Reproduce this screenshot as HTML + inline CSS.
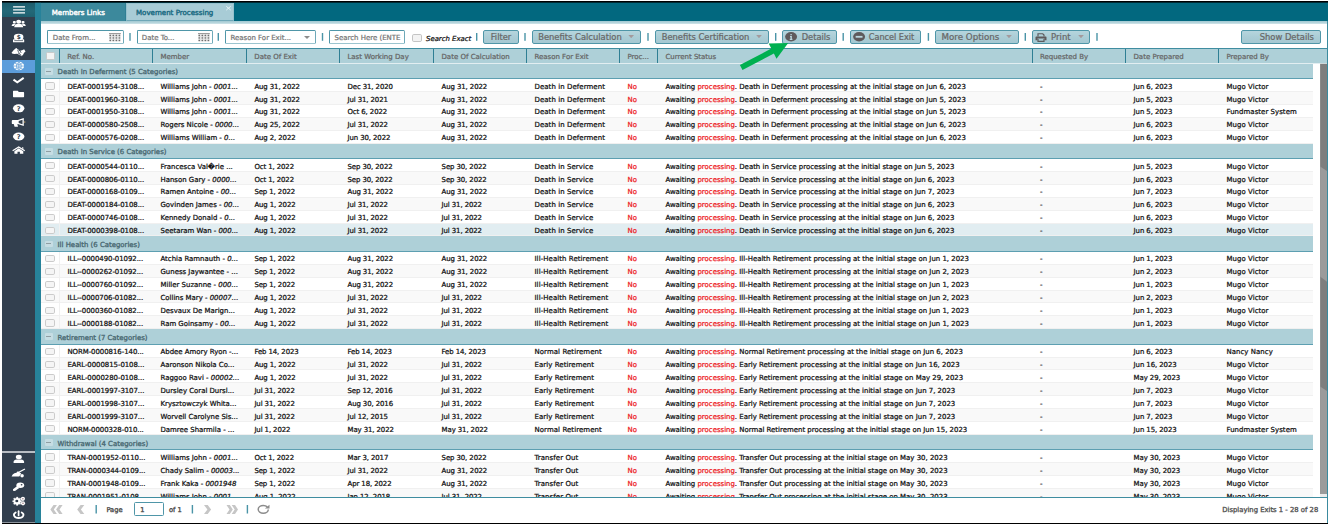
<!DOCTYPE html>
<html lang="en">
<head>
<meta charset="utf-8">
<title>Movement Processing</title>
<style>
html,body{margin:0;padding:0;}
body{width:1331px;height:526px;position:relative;background:#fff;overflow:hidden;font-family:"DejaVu Sans","Liberation Sans",sans-serif;font-weight:normal;font-size:7px;color:#000;-webkit-text-stroke:0.24px currentColor;}
div,span{box-sizing:border-box;}
.abs{position:absolute;}
#side{position:absolute;left:2px;top:2px;width:32.7px;height:520.7px;background:#323f4e;}
#burger{position:absolute;left:0;top:0;width:32.7px;height:14.5px;background:linear-gradient(#1d5b6b,#236878 60%,#1f6070);}
#side svg{position:absolute;overflow:visible;}
#act{position:absolute;left:0;top:57.5px;width:32.7px;height:13.9px;background:#5c9ddb;}
#sline{position:absolute;left:0;top:448.9px;width:32.7px;height:2px;background:#b9bec4;}
#strip{position:absolute;left:34.7px;top:2px;width:6px;height:520.7px;background:#27829a;}
#hbar{position:absolute;left:40.7px;top:2px;width:1287.3px;height:18.8px;background:#02687f;}
#tab1{position:absolute;left:41.4px;top:3px;width:84.4px;height:17.8px;background:#3c899c;color:#fff;border-right:1.3px solid #2f7f94;}
#tab2{position:absolute;left:126.3px;top:3px;width:107.7px;height:17.8px;background:#a8ccd6;color:#1b6b82;border:1px solid #95c1cd;border-bottom:1px solid #6ea7b7;}
.tt{position:absolute;top:4.6px;white-space:nowrap;font-size:7.07px;line-height:10px;-webkit-text-stroke:0.4px currentColor;}
#band{position:absolute;left:40.7px;top:20.8px;width:1286.6px;height:3.6px;background:linear-gradient(#a4c9d2,#aed0d8 40%,#c9e0e5 85%,#fff);}
#rborder{position:absolute;left:1327px;top:20.8px;width:0.9px;height:501.9px;background:#3a8a9e;}
/* toolbar */
.inp{position:absolute;top:30px;height:14.2px;border:1px solid #4f96a8;border-color:#4f96a8 #6ea9b8 #9cc5cf #4f96a8;border-radius:1.5px;background:#fff;color:#777;}
.inp span{position:absolute;top:3px;line-height:9.5px;white-space:nowrap;font-size:6.97px;}
.sep{position:absolute;top:33px;width:1.4px;height:7.8px;background:#4f98aa;}
.btn{position:absolute;top:30.1px;height:13.6px;border:1px solid #4f96a8;border-radius:2px;background:linear-gradient(#b6d5dd,#abcdd6 50%,#a4c8d2);color:#686868;}
.btn span{position:absolute;top:1.2px;line-height:10.4px;white-space:nowrap;font-size:8.35px;}
.dar{position:absolute;top:4px;width:5.6px;height:3.1px;background:#a3999c;clip-path:polygon(0 0,100% 0,50% 100%);}
.btn svg,.inp svg{position:absolute;overflow:visible;}
/* grid */
#ghdr{position:absolute;left:40.7px;top:48.2px;width:1286.6px;height:15.8px;background:#aed0d8;border-top:1px solid #3f8da0;border-bottom:1px solid #e2eef1;}
.hc{position:absolute;top:0;height:13.9px;border-left:1.3px solid #2f7f94;}
.hc:first-child{border-left:none;}
.ht{position:absolute;left:7px;top:3.8px;line-height:9.5px;color:#666;white-space:nowrap;font-size:7px;}
.hcb{position:absolute;left:4.9px;top:3.2px;width:9.4px;height:7.3px;background:#f4f4f4;border:0.8px solid #c9c9c9;border-radius:1.5px;}
#gbody{position:absolute;left:40.7px;top:63.8px;width:1272.3px;height:433.6px;overflow:hidden;background:#fff;}
.grp{position:absolute;left:0;width:1272.3px;height:15.4px;background:#aed0d8;border-bottom:1px solid #5d9fb1;}
.minus{position:absolute;left:4.2px;top:4.1px;width:8.1px;height:6.8px;background:#c6dde3;border-radius:1px;}
.minus:after{content:"";position:absolute;left:1.6px;top:2.9px;width:4.9px;height:1px;background:#8f9ea3;}
.gt{position:absolute;left:16.9px;top:3.3px;line-height:9.5px;white-space:nowrap;color:#4a6972;font-size:6.93px;-webkit-text-stroke:0.33px currentColor;}
.row{position:absolute;left:0;width:1272.3px;height:12.9px;border-bottom:0.6px solid #f0f0f0;background:#fff;}
.row.alt{background:#f9f9f9;}
.row.sel{background:#e1edf1;}
.cb{position:absolute;left:4.6px;top:3.1px;width:9.6px;height:7.3px;background:#f5f5f5;border:0.8px solid #cbcbcb;border-radius:1.8px;}
.row:before{content:"";position:absolute;left:18.6px;top:0;width:0.8px;height:12.9px;background:#f0f0f0;}
.c{position:absolute;top:2.4px;line-height:9.5px;white-space:nowrap;font-size:6.95px;color:#111;}
.c i{font-style:italic;}
.k1{letter-spacing:-0.045px;}.k3,.k4,.k5{letter-spacing:-0.095px;}.k6{letter-spacing:0.088px;}.k10{letter-spacing:-0.073px;}.k11{letter-spacing:0.055px;}
.r{color:#ed1c24;}
.d{color:#333;}
/* paging */
#ptb{position:absolute;left:40.7px;top:497.2px;width:1286.6px;height:25.5px;background:#fff;border-top:1px solid #3f8da0;color:#4a4a4a;}
#ptb span{position:absolute;white-space:nowrap;line-height:10px;font-size:6.7px;-webkit-text-stroke:0.34px currentColor;}
#ptb svg{position:absolute;overflow:visible;}
</style>
</head>
<body>
<!-- window frame -->
<div class="abs" style="left:2px;top:1px;width:1326px;height:1px;background:#000;z-index:30"></div>
<div class="abs" style="left:2px;top:2px;width:1326px;height:1px;background:rgba(0,0,0,.58);z-index:30"></div>
<div id="hbar"></div>
<div id="side">
  <div id="burger"></div>
  <div id="act"></div>
  <div id="sline"></div>
  <svg style="left:0;top:0" width="32.7" height="520.7" viewBox="2 2 32.7 520.7" fill="#fff">
    <!-- burger -->
    <path d="M13.100 6.700H25M13.100 9.750H25M13.100 12.700H25" stroke="#fff" stroke-width="1.300" fill="none"/>
    <!-- users -->
    <ellipse cx="18.700" cy="21.700" rx="2.500" ry="2"/>
    <path d="M14.200 27.100c0-2.300 1.600-3.400 4.500-3.400s4.500 1.100 4.500 3.400z"/>
    <rect x="12.900" y="20.900" width="2.900" height="2.600" rx="1"/>
    <rect x="21.600" y="20.900" width="2.900" height="2.600" rx="1"/>
    <path d="M11.700 26c0-1.600.9-2.400 2.600-2.400.6 0 1.100.1 1.500.4-1 .5-1.600 1.200-1.800 2zM25.700 26c0-1.600-.9-2.400-2.600-2.400-.6 0-1.100.1-1.500.4 1 .5 1.600 1.200 1.800 2z"/>
    <!-- user dollar -->
    <ellipse cx="18.650" cy="36.900" rx="4.800" ry="3.250"/>
    <path d="M13 42.100v-2.100c0-.5.300-.8.800-.8h9.600c.5 0 .8.300.8.800v2.100z"/>
    <path d="M14.300 40.300h8.700v.7h-8.700z" fill="#323f4e"/>
    <text x="18.650" y="39.100" font-size="5.800" font-weight="bold" text-anchor="middle" fill="#323f4e" font-family="DejaVu Sans, Liberation Sans, sans-serif">$</text>
    <!-- handshake -->
    <path d="M11.560 52.560L13.560 50.270 16.120 47.880 18.120 48.850 20.120 50.560 22.110 50.270 24.110 49.250 25.540 51.420 24.110 52.560 22.970 54.840 21.260 56.090 19.550 54.840 17.260 53.700 14.130 53.980 12.130 53.410z"/>
    <path d="M17.600 50.100l1.700 3.300M19.900 50.400l1.300 2.500" stroke="#323f4e" stroke-width=".75" fill="none"/><path d="M17.200 47.900l1.500 2.300 1.400.4M21.200 56.100l-1.200-2.200-1.600-.5" stroke="#323f4e" stroke-width=".8" fill="none"/>
    <!-- globe -->
    <ellipse cx="18.850" cy="66" rx="5.250" ry="4.250"/>
    <path d="M18.850 61.750v8.500M13.600 66h10.500M15 63.100c2.300 1.700 5.400 1.700 7.700 0M15 68.900c2.300-1.700 5.400-1.700 7.700 0M18.850 61.800c-3.200 2.200-3.200 6.200 0 8.400M18.850 61.800c3.200 2.200 3.200 6.200 0 8.400" stroke="#5b9bd5" stroke-width=".7" fill="none"/>
    <!-- check -->
    <path d="M13.500 79.600l3.800 2.700 6.400-4.500" stroke="#fff" stroke-width="2" fill="none"/>
    <!-- folder -->
    <path d="M13 91.400c0-.4.200-.6.600-.6h4.200l1 1.200h4.700c.4 0 .6.200.6.600v3.900c0 .4-.2.600-.6.600h-9.900c-.4 0-.6-.2-.6-.6z"/>
    <!-- question -->
    <ellipse cx="18.700" cy="108.300" rx="5.700" ry="4"/>
    <text x="18.700" y="110.700" font-size="6.600" font-weight="bold" text-anchor="middle" fill="#323f4e" font-family="DejaVu Sans, Liberation Sans, sans-serif">?</text>
    <!-- megaphone -->
    <path d="M11.800 120.900c0-.6.300-.9.900-.9h5.100l6-2v8l-6-2h-.4l.6 2.800h-3.400l-.9-2.800h-1c-.6 0-.9-.3-.9-.9z"/>
    <path d="M18.700 121l3.800-1.200v4.400l-3.800-1.200z" fill="#323f4e"/>
    <rect x="24.400" y="121.300" width=".8" height="1.400" fill="#f0c070"/>
    <!-- question 2 -->
    <ellipse cx="18.700" cy="136.500" rx="5.700" ry="4"/>
    <text x="18.700" y="138.900" font-size="6.600" font-weight="bold" text-anchor="middle" fill="#323f4e" font-family="DejaVu Sans, Liberation Sans, sans-serif">?</text>
    <!-- home -->
    <path d="M18.700 146.300l6.400 4-.7.800-5.700-3.500-5.700 3.500-.7-.8z"/>
    <path d="M18.700 148.300l4.600 2.800v2.600h-3.400v-1.900h-2.400v1.900h-3.100v-2.600z"/>
    <path d="M22.100 147.100h1.200v2l-1.200-.8z"/>
    <!-- user -->
    <ellipse cx="18.800" cy="457" rx="3" ry="2.250"/>
    <path d="M13.600 463.200v-1.300c0-1.500 1.200-2.400 3-2.400h4.500c1.800 0 3 .9 3 2.400v1.300z"/>
    <!-- broom -->
    <path d="M24.970 469.100L18.400 472.600" stroke="#fff" stroke-width="1.300" fill="none"/>
    <path d="M17.830 471.400L21.260 473.700 19.260 476.600 11.560 476.700 12.700 474.500 14.400 473.400 16.400 472.800z"/>
    <circle cx="22.100" cy="475.800" r="1.750"/>
    <!-- key -->
    <ellipse cx="20.300" cy="485.300" rx="3.900" ry="2.700"/>
    <path d="M17.260 486L19.260 488 14.980 491 12.990 490.800 12.990 489.400z"/>
    <ellipse cx="21.600" cy="484.800" rx=".9" ry=".75" fill="#323f4e"/>
    <!-- cogs -->
    <path d="M16.700 497l1 .1.400 1 1 .4 1-.5.800.8-.6.900.3.800 1.100.3v1.100l-1.100.3-.3.800.6.900-.8.800-1-.5-1 .4-.4 1h-1.200l-.3-1-1-.4-1 .5-.8-.8.600-.9-.3-.8-1.100-.3v-1.100l1.100-.3.300-.8-.6-.9.800-.8 1 .5 1-.4z" stroke="#fff" stroke-width=".3"/>
    <ellipse cx="16.800" cy="501.100" rx="1.500" ry="1.200" fill="#323f4e"/>
    <circle cx="22.900" cy="498.900" r="2.100"/><circle cx="23" cy="503.400" r="2.100"/>
    <circle cx="22.900" cy="498.900" r=".7" fill="#8a6a70"/><circle cx="23" cy="503.400" r=".7" fill="#8a6a70"/>
    <!-- power -->
    <path d="M15.700 512.600c-3.300 1.800-1.700 5.500 3 5.500s6.300-3.700 3-5.500" stroke="#fff" stroke-width="1.800" fill="none" stroke-linecap="round"/>
    <path d="M18.600 511.300v4.200" stroke="#fff" stroke-width="1.700" stroke-linecap="round" fill="none"/>
  </svg>
</div>
<div id="strip"></div>
<div id="tab1"><span class="tt" style="left:10.3px">Members Links</span></div>
<div id="tab2"><span class="tt" style="left:8.7px;top:3.6px">Movement Processing</span>
  <svg class="abs" style="left:98.400px;top:2.400px;overflow:visible" width="5" height="4.400" viewBox="0 0 5 4.400"><path d="M.3.300l4.400 3.800M4.700.3L.3 4.100" stroke="#e9f3f6" stroke-width="1"/></svg>
</div>
<div id="band"></div>
<div id="rborder"></div>
<!-- toolbar -->
<div class="inp" style="left:47.100px;width:76.600px"><span style="left:4.700px">Date From...</span>
  <svg style="left:61px;top:2px" width="11.800" height="8.400" viewBox="0 0 11.800 8.400"><rect x="0" y="0" width="11.800" height="8.400" fill="#e4e4e4"/><rect x="0" y="0" width="11.800" height="1" fill="#9c9c9c"/><rect x="1.00" y="1.2" width=".5" height="7.100" fill="#b5b5b5"/><rect x="4.05" y="1.2" width=".5" height="7.100" fill="#b5b5b5"/><rect x="7.10" y="1.2" width=".5" height="7.100" fill="#b5b5b5"/><rect x="10.15" y="1.2" width=".5" height="7.100" fill="#b5b5b5"/><g fill="#6f6f6f"><rect x="0.50" y="1.90" width="1.500" height="1.100"/><rect x="3.55" y="1.90" width="1.500" height="1.100"/><rect x="6.60" y="1.90" width="1.500" height="1.100"/><rect x="9.65" y="1.90" width="1.500" height="1.100"/><rect x="0.50" y="4.40" width="1.500" height="1.100"/><rect x="3.55" y="4.40" width="1.500" height="1.100"/><rect x="6.60" y="4.40" width="1.500" height="1.100"/><rect x="9.65" y="4.40" width="1.500" height="1.100"/><rect x="0.50" y="7.00" width="1.500" height="1.100"/><rect x="3.55" y="7.00" width="1.500" height="1.100"/><rect x="6.60" y="7.00" width="1.500" height="1.100"/><rect x="9.65" y="7.00" width="1.500" height="1.100"/></g></svg>
</div>
<div class="inp" style="left:136.900px;width:75.700px"><span style="left:3.900px">Date To...</span>
  <svg style="left:60px;top:2px" width="11.800" height="8.400" viewBox="0 0 11.800 8.400"><rect x="0" y="0" width="11.800" height="8.400" fill="#e4e4e4"/><rect x="0" y="0" width="11.800" height="1" fill="#9c9c9c"/><rect x="1.00" y="1.2" width=".5" height="7.100" fill="#b5b5b5"/><rect x="4.05" y="1.2" width=".5" height="7.100" fill="#b5b5b5"/><rect x="7.10" y="1.2" width=".5" height="7.100" fill="#b5b5b5"/><rect x="10.15" y="1.2" width=".5" height="7.100" fill="#b5b5b5"/><g fill="#6f6f6f"><rect x="0.50" y="1.90" width="1.500" height="1.100"/><rect x="3.55" y="1.90" width="1.500" height="1.100"/><rect x="6.60" y="1.90" width="1.500" height="1.100"/><rect x="9.65" y="1.90" width="1.500" height="1.100"/><rect x="0.50" y="4.40" width="1.500" height="1.100"/><rect x="3.55" y="4.40" width="1.500" height="1.100"/><rect x="6.60" y="4.40" width="1.500" height="1.100"/><rect x="9.65" y="4.40" width="1.500" height="1.100"/><rect x="0.50" y="7.00" width="1.500" height="1.100"/><rect x="3.55" y="7.00" width="1.500" height="1.100"/><rect x="6.60" y="7.00" width="1.500" height="1.100"/><rect x="9.65" y="7.00" width="1.500" height="1.100"/></g></svg>
</div>
<div class="inp" style="left:225px;width:91px"><span style="left:4.500px">Reason For Exit...</span>
  <i class="dar" style="left:78px;top:5px;background:#8d8d8d;width:6px;height:2.900px"></i>
</div>
<div class="inp" style="left:329.100px;width:75.900px"><span style="left:4.500px">Search Here (ENTE</span></div>
<div class="abs" style="left:412px;top:34.300px;width:9.500px;height:7.900px;background:#f3f3f3;border:0.8px solid #c4c4c4;border-radius:1.800px"></div>
<span class="abs" style="left:426px;top:35px;line-height:9.500px;font-style:italic;font-size:6.910px;white-space:nowrap;color:#111">Search Exact</span>
<div class="btn" style="left:483px;width:35.600px"><span style="left:6.700px;font-size:8.28px">Filter</span></div>
<div class="btn" style="left:531.700px;width:109.700px"><span style="left:5.500px;font-size:8.37px">Benefits Calculation</span><i class="dar" style="left:95.700px"></i></div>
<div class="btn" style="left:654.800px;width:113.800px"><span style="left:5.900px;font-size:8.35px">Benefits Certification</span><i class="dar" style="left:100.400px"></i></div>
<div class="btn" style="left:782.200px;width:54.600px"><span style="left:18.500px;font-size:8.28px">Details</span>
  <svg style="left:2px;top:1.200px" width="12.200" height="9.600" viewBox="0 0 23 19" preserveAspectRatio="none"><ellipse cx="11.500" cy="9.500" rx="11.300" ry="9.300" fill="#5e5a5c"/><path d="M11.500 4v2.500M9.500 9h2.200v5.500M9 14.600h5" stroke="#b9d6de" stroke-width="2.600" fill="none"/></svg>
</div>
<div class="btn" style="left:850px;width:71px"><span style="left:17.800px;font-size:8.12px">Cancel Exit</span>
  <svg style="left:2px;top:1.200px" width="12.200" height="9.600" viewBox="0 0 23 19" preserveAspectRatio="none"><ellipse cx="11.500" cy="9.500" rx="11.300" ry="9.300" fill="#5e5a5c"/><path d="M5 9.500h13" stroke="#b9d6de" stroke-width="3.600"/></svg>
</div>
<div class="btn" style="left:935px;width:84px"><span style="left:5.500px;font-size:8.7px">More Options</span><i class="dar" style="left:70.200px"></i></div>
<div class="btn" style="left:1032.200px;width:58.200px"><span style="left:17.900px;font-size:8.5px">Print</span><i class="dar" style="left:45px"></i>
  <svg style="left:2.200px;top:1.600px" width="12" height="9" viewBox="0 0 24 18" fill="none"><path d="M6 7V1.500h9.500L18 4v3" stroke="#5e5a5c" stroke-width="2.400"/><path d="M1 9c0-1.200.8-2 2-2h18c1.200 0 2 .8 2 2v5.500h-4V11H5v3.500H1z" fill="#5e5a5c"/><path d="M6 12v4.800h12V12" stroke="#5e5a5c" stroke-width="2.400"/></svg>
</div>
<div class="btn" style="left:1241.100px;width:79.800px"><span style="left:17.600px;font-size:8.37px">Show Details</span></div>
<!-- green arrow -->
<svg class="abs" style="left:0;top:0;z-index:20;pointer-events:none" width="1331" height="100" viewBox="0 0 1331 100"><g fill="#4a94a7"><rect x="129.3" y="33" width="1.4" height="7.8"/><rect x="217.6" y="33" width="1.4" height="7.8"/><rect x="321.8" y="33" width="1.4" height="7.8"/><rect x="476.0" y="33" width="1.4" height="7.8"/><rect x="524.3" y="33" width="1.4" height="7.8"/><rect x="647.3" y="33" width="1.4" height="7.8"/><rect x="775.0" y="33" width="1.4" height="7.8"/><rect x="842.5" y="33" width="1.4" height="7.8"/><rect x="927.7" y="33" width="1.4" height="7.8"/><rect x="1024.6" y="33" width="1.4" height="7.8"/><rect x="1096.3" y="33" width="1.4" height="7.8"/></g><polygon points="739.9,64.900 771.300,48.600 768.700,43.400 788.200,43.100 776.500,58.800 773.900,53.600 742.500,69.900" fill="#00b050"/></svg>

<div id="ghdr">
<div class="hc" style="left:0px;width:18.6px"><span class="hcb"></span></div>
<div class="hc" style="left:18.6px;width:93.1px"><span class="ht">Ref. No.</span></div>
<div class="hc" style="left:111.7px;width:93.9px"><span class="ht">Member</span></div>
<div class="hc" style="left:205.6px;width:93.1px"><span class="ht">Date Of Exit</span></div>
<div class="hc" style="left:298.7px;width:94.1px"><span class="ht">Last Working Day</span></div>
<div class="hc" style="left:392.8px;width:92.9px"><span class="ht">Date Of Calculation</span></div>
<div class="hc" style="left:485.7px;width:93px"><span class="ht">Reason For Exit</span></div>
<div class="hc" style="left:578.7px;width:38px"><span class="ht">Proc...</span></div>
<div class="hc" style="left:616.7px;width:374.5px"><span class="ht">Current Status</span></div>
<div class="hc" style="left:991.2px;width:93.6px"><span class="ht">Requested By</span></div>
<div class="hc" style="left:1084.8px;width:92.9px"><span class="ht">Date Prepared</span></div>
<div class="hc" style="left:1177.7px;width:108.9px"><span class="ht">Prepared By</span></div>
</div>
<div id="gbody">
<div class="grp" style="top:0px"><span class="minus"></span><span class="gt" style="top:4.2px">Death In Deferment (5 Categories)</span></div>
<div class="row" style="top:15.4px"><span class="cb"></span>
<span class="c k1" style="left:26.7px;top:3.8px">DEAT-0001954-3108...</span>
<span class="c k2" style="left:119.8px;top:3.8px">Williams John - <i>0001...</i></span>
<span class="c k3" style="left:213.7px;top:3.8px">Aug 31, 2022</span>
<span class="c k4" style="left:306.8px;top:3.8px">Dec 31, 2020</span>
<span class="c k5" style="left:400.9px;top:3.8px">Aug 31, 2022</span>
<span class="c k6" style="left:493.8px;top:3.8px">Death in Deferment</span>
<span class="c k7" style="left:586.8px;top:3.8px"><span class="r">No</span></span>
<span class="c k8" style="left:624.8px;top:3.8px">Awaiting <span class="r">processing</span>. Death in Deferment processing at the initial stage on Jun 6, 2023</span>
<span class="c k9" style="left:999.3px;top:3.8px"><span class="d">-</span></span>
<span class="c k10" style="left:1092.9px;top:3.8px">Jun 6, 2023</span>
<span class="c k11" style="left:1185.8px;top:3.8px">Mugo Victor</span>
</div>
<div class="row alt" style="top:28.3px"><span class="cb"></span>
<span class="c k1" style="left:26.7px;top:3.9px">DEAT-0001960-3108...</span>
<span class="c k2" style="left:119.8px;top:3.9px">Williams John - <i>0001...</i></span>
<span class="c k3" style="left:213.7px;top:3.9px">Aug 31, 2022</span>
<span class="c k4" style="left:306.8px;top:3.9px">Jul 31, 2021</span>
<span class="c k5" style="left:400.9px;top:3.9px">Aug 31, 2022</span>
<span class="c k6" style="left:493.8px;top:3.9px">Death in Deferment</span>
<span class="c k7" style="left:586.8px;top:3.9px"><span class="r">No</span></span>
<span class="c k8" style="left:624.8px;top:3.9px">Awaiting <span class="r">processing</span>. Death in Deferment processing at the initial stage on Jun 5, 2023</span>
<span class="c k9" style="left:999.3px;top:3.9px"><span class="d">-</span></span>
<span class="c k10" style="left:1092.9px;top:3.9px">Jun 5, 2023</span>
<span class="c k11" style="left:1185.8px;top:3.9px">Mugo Victor</span>
</div>
<div class="row" style="top:41.2px"><span class="cb"></span>
<span class="c k1" style="left:26.7px;top:3px">DEAT-0001950-3108...</span>
<span class="c k2" style="left:119.8px;top:3px">Williams John - <i>0001...</i></span>
<span class="c k3" style="left:213.7px;top:3px">Aug 31, 2022</span>
<span class="c k4" style="left:306.8px;top:3px">Oct 6, 2022</span>
<span class="c k5" style="left:400.9px;top:3px">Aug 31, 2022</span>
<span class="c k6" style="left:493.8px;top:3px">Death in Deferment</span>
<span class="c k7" style="left:586.8px;top:3px"><span class="r">No</span></span>
<span class="c k8" style="left:624.8px;top:3px">Awaiting <span class="r">processing</span>. Death in Deferment processing at the initial stage on Jun 5, 2023</span>
<span class="c k9" style="left:999.3px;top:3px"><span class="d">-</span></span>
<span class="c k10" style="left:1092.9px;top:3px">Jun 5, 2023</span>
<span class="c k11" style="left:1185.8px;top:3px">Fundmaster System</span>
</div>
<div class="row alt" style="top:54.1px"><span class="cb"></span>
<span class="c k1" style="left:26.7px;top:3.1px">DEAT-0000580-2508...</span>
<span class="c k2" style="left:119.8px;top:3.1px">Rogers Nicole - <i>0000...</i></span>
<span class="c k3" style="left:213.7px;top:3.1px">Aug 25, 2022</span>
<span class="c k4" style="left:306.8px;top:3.1px">Jul 31, 2022</span>
<span class="c k5" style="left:400.9px;top:3.1px">Aug 31, 2022</span>
<span class="c k6" style="left:493.8px;top:3.1px">Death in Deferment</span>
<span class="c k7" style="left:586.8px;top:3.1px"><span class="r">No</span></span>
<span class="c k8" style="left:624.8px;top:3.1px">Awaiting <span class="r">processing</span>. Death in Deferment processing at the initial stage on Jun 6, 2023</span>
<span class="c k9" style="left:999.3px;top:3.1px"><span class="d">-</span></span>
<span class="c k10" style="left:1092.9px;top:3.1px">Jun 6, 2023</span>
<span class="c k11" style="left:1185.8px;top:3.1px">Mugo Victor</span>
</div>
<div class="row" style="top:67px"><span class="cb"></span>
<span class="c k1" style="left:26.7px;top:3.2px">DEAT-0000576-0208...</span>
<span class="c k2" style="left:119.8px;top:3.2px">Williams William - <i>0...</i></span>
<span class="c k3" style="left:213.7px;top:3.2px">Aug 2, 2022</span>
<span class="c k4" style="left:306.8px;top:3.2px">Jun 30, 2022</span>
<span class="c k5" style="left:400.9px;top:3.2px">Aug 31, 2022</span>
<span class="c k6" style="left:493.8px;top:3.2px">Death in Deferment</span>
<span class="c k7" style="left:586.8px;top:3.2px"><span class="r">No</span></span>
<span class="c k8" style="left:624.8px;top:3.2px">Awaiting <span class="r">processing</span>. Death in Deferment processing at the initial stage on Jun 6, 2023</span>
<span class="c k9" style="left:999.3px;top:3.2px"><span class="d">-</span></span>
<span class="c k10" style="left:1092.9px;top:3.2px">Jun 6, 2023</span>
<span class="c k11" style="left:1185.8px;top:3.2px">Mugo Victor</span>
</div>
<div class="grp" style="top:79.9px"><span class="minus"></span><span class="gt" style="top:4.3px">Death In Service (6 Categories)</span></div>
<div class="row" style="top:95.3px"><span class="cb"></span>
<span class="c k1" style="left:26.7px;top:3.9px">DEAT-0000544-0110...</span>
<span class="c k2" style="left:119.8px;top:3.9px">Francesca Val�rie ...</span>
<span class="c k3" style="left:213.7px;top:3.9px">Oct 1, 2022</span>
<span class="c k4" style="left:306.8px;top:3.9px">Sep 30, 2022</span>
<span class="c k5" style="left:400.9px;top:3.9px">Sep 30, 2022</span>
<span class="c k6" style="left:493.8px;top:3.9px">Death in Service</span>
<span class="c k7" style="left:586.8px;top:3.9px"><span class="r">No</span></span>
<span class="c k8" style="left:624.8px;top:3.9px">Awaiting <span class="r">processing</span>. Death in Service processing at the initial stage on Jun 5, 2023</span>
<span class="c k9" style="left:999.3px;top:3.9px"><span class="d">-</span></span>
<span class="c k10" style="left:1092.9px;top:3.9px">Jun 5, 2023</span>
<span class="c k11" style="left:1185.8px;top:3.9px">Mugo Victor</span>
</div>
<div class="row alt" style="top:108.2px"><span class="cb"></span>
<span class="c k1" style="left:26.7px;top:4px">DEAT-0000806-0110...</span>
<span class="c k2" style="left:119.8px;top:4px">Hanson Gary - <i>0000...</i></span>
<span class="c k3" style="left:213.7px;top:4px">Oct 1, 2022</span>
<span class="c k4" style="left:306.8px;top:4px">Sep 30, 2022</span>
<span class="c k5" style="left:400.9px;top:4px">Sep 30, 2022</span>
<span class="c k6" style="left:493.8px;top:4px">Death in Service</span>
<span class="c k7" style="left:586.8px;top:4px"><span class="r">No</span></span>
<span class="c k8" style="left:624.8px;top:4px">Awaiting <span class="r">processing</span>. Death in Service processing at the initial stage on Jun 6, 2023</span>
<span class="c k9" style="left:999.3px;top:4px"><span class="d">-</span></span>
<span class="c k10" style="left:1092.9px;top:4px">Jun 6, 2023</span>
<span class="c k11" style="left:1185.8px;top:4px">Mugo Victor</span>
</div>
<div class="row" style="top:121.1px"><span class="cb"></span>
<span class="c k1" style="left:26.7px;top:3.1px">DEAT-0000168-0109...</span>
<span class="c k2" style="left:119.8px;top:3.1px">Ramen Antoine - <i>00...</i></span>
<span class="c k3" style="left:213.7px;top:3.1px">Sep 1, 2022</span>
<span class="c k4" style="left:306.8px;top:3.1px">Aug 31, 2022</span>
<span class="c k5" style="left:400.9px;top:3.1px">Aug 31, 2022</span>
<span class="c k6" style="left:493.8px;top:3.1px">Death in Service</span>
<span class="c k7" style="left:586.8px;top:3.1px"><span class="r">No</span></span>
<span class="c k8" style="left:624.8px;top:3.1px">Awaiting <span class="r">processing</span>. Death in Service processing at the initial stage on Jun 7, 2023</span>
<span class="c k9" style="left:999.3px;top:3.1px"><span class="d">-</span></span>
<span class="c k10" style="left:1092.9px;top:3.1px">Jun 7, 2023</span>
<span class="c k11" style="left:1185.8px;top:3.1px">Mugo Victor</span>
</div>
<div class="row alt" style="top:134px"><span class="cb"></span>
<span class="c k1" style="left:26.7px;top:3.2px">DEAT-0000184-0108...</span>
<span class="c k2" style="left:119.8px;top:3.2px">Govinden James - <i>00...</i></span>
<span class="c k3" style="left:213.7px;top:3.2px">Aug 1, 2022</span>
<span class="c k4" style="left:306.8px;top:3.2px">Jul 31, 2022</span>
<span class="c k5" style="left:400.9px;top:3.2px">Jul 31, 2022</span>
<span class="c k6" style="left:493.8px;top:3.2px">Death in Service</span>
<span class="c k7" style="left:586.8px;top:3.2px"><span class="r">No</span></span>
<span class="c k8" style="left:624.8px;top:3.2px">Awaiting <span class="r">processing</span>. Death in Service processing at the initial stage on Jun 6, 2023</span>
<span class="c k9" style="left:999.3px;top:3.2px"><span class="d">-</span></span>
<span class="c k10" style="left:1092.9px;top:3.2px">Jun 6, 2023</span>
<span class="c k11" style="left:1185.8px;top:3.2px">Mugo Victor</span>
</div>
<div class="row" style="top:146.9px"><span class="cb"></span>
<span class="c k1" style="left:26.7px;top:3.3px">DEAT-0000746-0108...</span>
<span class="c k2" style="left:119.8px;top:3.3px">Kennedy Donald - <i>0...</i></span>
<span class="c k3" style="left:213.7px;top:3.3px">Aug 1, 2022</span>
<span class="c k4" style="left:306.8px;top:3.3px">Jul 31, 2022</span>
<span class="c k5" style="left:400.9px;top:3.3px">Jul 31, 2022</span>
<span class="c k6" style="left:493.8px;top:3.3px">Death in Service</span>
<span class="c k7" style="left:586.8px;top:3.3px"><span class="r">No</span></span>
<span class="c k8" style="left:624.8px;top:3.3px">Awaiting <span class="r">processing</span>. Death in Service processing at the initial stage on Jun 6, 2023</span>
<span class="c k9" style="left:999.3px;top:3.3px"><span class="d">-</span></span>
<span class="c k10" style="left:1092.9px;top:3.3px">Jun 6, 2023</span>
<span class="c k11" style="left:1185.8px;top:3.3px">Mugo Victor</span>
</div>
<div class="row sel" style="top:159.8px"><span class="cb"></span>
<span class="c k1" style="left:26.7px;top:3.4px">DEAT-0000398-0108...</span>
<span class="c k2" style="left:119.8px;top:3.4px">Seetaram Wan - <i>000...</i></span>
<span class="c k3" style="left:213.7px;top:3.4px">Aug 1, 2022</span>
<span class="c k4" style="left:306.8px;top:3.4px">Jul 31, 2022</span>
<span class="c k5" style="left:400.9px;top:3.4px">Jul 31, 2022</span>
<span class="c k6" style="left:493.8px;top:3.4px">Death in Service</span>
<span class="c k7" style="left:586.8px;top:3.4px"><span class="r">No</span></span>
<span class="c k8" style="left:624.8px;top:3.4px">Awaiting <span class="r">processing</span>. Death in Service processing at the initial stage on Jun 6, 2023</span>
<span class="c k9" style="left:999.3px;top:3.4px"><span class="d">-</span></span>
<span class="c k10" style="left:1092.9px;top:3.4px">Jun 6, 2023</span>
<span class="c k11" style="left:1185.8px;top:3.4px">Mugo Victor</span>
</div>
<div class="grp" style="top:172.7px"><span class="minus"></span><span class="gt" style="top:4.5px">Ill Health (6 Categories)</span></div>
<div class="row" style="top:188.1px"><span class="cb"></span>
<span class="c k1" style="left:26.7px;top:3.1px">ILL--0000490-01092...</span>
<span class="c k2" style="left:119.8px;top:3.1px">Atchia Ramnauth - <i>0...</i></span>
<span class="c k3" style="left:213.7px;top:3.1px">Sep 1, 2022</span>
<span class="c k4" style="left:306.8px;top:3.1px">Aug 31, 2022</span>
<span class="c k5" style="left:400.9px;top:3.1px">Aug 31, 2022</span>
<span class="c k6" style="left:493.8px;top:3.1px">Ill-Health Retirement</span>
<span class="c k7" style="left:586.8px;top:3.1px"><span class="r">No</span></span>
<span class="c k8" style="left:624.8px;top:3.1px">Awaiting <span class="r">processing</span>. Ill-Health Retirement processing at the initial stage on Jun 1, 2023</span>
<span class="c k9" style="left:999.3px;top:3.1px"><span class="d">-</span></span>
<span class="c k10" style="left:1092.9px;top:3.1px">Jun 1, 2023</span>
<span class="c k11" style="left:1185.8px;top:3.1px">Mugo Victor</span>
</div>
<div class="row alt" style="top:201px"><span class="cb"></span>
<span class="c k1" style="left:26.7px;top:3.2px">ILL--0000262-01092...</span>
<span class="c k2" style="left:119.8px;top:3.2px">Guness Jaywantee - ...</span>
<span class="c k3" style="left:213.7px;top:3.2px">Sep 1, 2022</span>
<span class="c k4" style="left:306.8px;top:3.2px">Aug 31, 2022</span>
<span class="c k5" style="left:400.9px;top:3.2px">Aug 31, 2022</span>
<span class="c k6" style="left:493.8px;top:3.2px">Ill-Health Retirement</span>
<span class="c k7" style="left:586.8px;top:3.2px"><span class="r">No</span></span>
<span class="c k8" style="left:624.8px;top:3.2px">Awaiting <span class="r">processing</span>. Ill-Health Retirement processing at the initial stage on Jun 2, 2023</span>
<span class="c k9" style="left:999.3px;top:3.2px"><span class="d">-</span></span>
<span class="c k10" style="left:1092.9px;top:3.2px">Jun 2, 2023</span>
<span class="c k11" style="left:1185.8px;top:3.2px">Mugo Victor</span>
</div>
<div class="row" style="top:213.9px"><span class="cb"></span>
<span class="c k1" style="left:26.7px;top:3.3px">ILL--0000760-01092...</span>
<span class="c k2" style="left:119.8px;top:3.3px">Miller Suzanne - <i>000...</i></span>
<span class="c k3" style="left:213.7px;top:3.3px">Sep 1, 2022</span>
<span class="c k4" style="left:306.8px;top:3.3px">Aug 31, 2022</span>
<span class="c k5" style="left:400.9px;top:3.3px">Aug 31, 2022</span>
<span class="c k6" style="left:493.8px;top:3.3px">Ill-Health Retirement</span>
<span class="c k7" style="left:586.8px;top:3.3px"><span class="r">No</span></span>
<span class="c k8" style="left:624.8px;top:3.3px">Awaiting <span class="r">processing</span>. Ill-Health Retirement processing at the initial stage on Jun 1, 2023</span>
<span class="c k9" style="left:999.3px;top:3.3px"><span class="d">-</span></span>
<span class="c k10" style="left:1092.9px;top:3.3px">Jun 1, 2023</span>
<span class="c k11" style="left:1185.8px;top:3.3px">Mugo Victor</span>
</div>
<div class="row alt" style="top:226.8px"><span class="cb"></span>
<span class="c k1" style="left:26.7px;top:3.4px">ILL--0000706-01082...</span>
<span class="c k2" style="left:119.8px;top:3.4px">Collins Mary - <i>00007...</i></span>
<span class="c k3" style="left:213.7px;top:3.4px">Aug 1, 2022</span>
<span class="c k4" style="left:306.8px;top:3.4px">Jul 31, 2022</span>
<span class="c k5" style="left:400.9px;top:3.4px">Jul 31, 2022</span>
<span class="c k6" style="left:493.8px;top:3.4px">Ill-Health Retirement</span>
<span class="c k7" style="left:586.8px;top:3.4px"><span class="r">No</span></span>
<span class="c k8" style="left:624.8px;top:3.4px">Awaiting <span class="r">processing</span>. Ill-Health Retirement processing at the initial stage on Jun 2, 2023</span>
<span class="c k9" style="left:999.3px;top:3.4px"><span class="d">-</span></span>
<span class="c k10" style="left:1092.9px;top:3.4px">Jun 2, 2023</span>
<span class="c k11" style="left:1185.8px;top:3.4px">Mugo Victor</span>
</div>
<div class="row" style="top:239.7px"><span class="cb"></span>
<span class="c k1" style="left:26.7px;top:3.5px">ILL--0000360-01082...</span>
<span class="c k2" style="left:119.8px;top:3.5px">Desvaux De Marign...</span>
<span class="c k3" style="left:213.7px;top:3.5px">Aug 1, 2022</span>
<span class="c k4" style="left:306.8px;top:3.5px">Jul 31, 2022</span>
<span class="c k5" style="left:400.9px;top:3.5px">Jul 31, 2022</span>
<span class="c k6" style="left:493.8px;top:3.5px">Ill-Health Retirement</span>
<span class="c k7" style="left:586.8px;top:3.5px"><span class="r">No</span></span>
<span class="c k8" style="left:624.8px;top:3.5px">Awaiting <span class="r">processing</span>. Ill-Health Retirement processing at the initial stage on Jun 1, 2023</span>
<span class="c k9" style="left:999.3px;top:3.5px"><span class="d">-</span></span>
<span class="c k10" style="left:1092.9px;top:3.5px">Jun 1, 2023</span>
<span class="c k11" style="left:1185.8px;top:3.5px">Mugo Victor</span>
</div>
<div class="row alt" style="top:252.6px"><span class="cb"></span>
<span class="c k1" style="left:26.7px;top:3.6px">ILL--0000188-01082...</span>
<span class="c k2" style="left:119.8px;top:3.6px">Ram Goinsamy - <i>00...</i></span>
<span class="c k3" style="left:213.7px;top:3.6px">Aug 1, 2022</span>
<span class="c k4" style="left:306.8px;top:3.6px">Jul 31, 2022</span>
<span class="c k5" style="left:400.9px;top:3.6px">Jul 31, 2022</span>
<span class="c k6" style="left:493.8px;top:3.6px">Ill-Health Retirement</span>
<span class="c k7" style="left:586.8px;top:3.6px"><span class="r">No</span></span>
<span class="c k8" style="left:624.8px;top:3.6px">Awaiting <span class="r">processing</span>. Ill-Health Retirement processing at the initial stage on Jun 1, 2023</span>
<span class="c k9" style="left:999.3px;top:3.6px"><span class="d">-</span></span>
<span class="c k10" style="left:1092.9px;top:3.6px">Jun 1, 2023</span>
<span class="c k11" style="left:1185.8px;top:3.6px">Mugo Victor</span>
</div>
<div class="grp" style="top:265.5px"><span class="minus"></span><span class="gt" style="top:4.7px">Retirement (7 Categories)</span></div>
<div class="row" style="top:280.9px"><span class="cb"></span>
<span class="c k1" style="left:26.7px;top:3.3px">NORM-0000816-140...</span>
<span class="c k2" style="left:119.8px;top:3.3px">Abdee Amory Ryon -...</span>
<span class="c k3" style="left:213.7px;top:3.3px">Feb 14, 2023</span>
<span class="c k4" style="left:306.8px;top:3.3px">Feb 14, 2023</span>
<span class="c k5" style="left:400.9px;top:3.3px">Feb 14, 2023</span>
<span class="c k6" style="left:493.8px;top:3.3px">Normal Retirement</span>
<span class="c k7" style="left:586.8px;top:3.3px"><span class="r">No</span></span>
<span class="c k8" style="left:624.8px;top:3.3px">Awaiting <span class="r">processing</span>. Normal Retirement processing at the initial stage on Jun 6, 2023</span>
<span class="c k9" style="left:999.3px;top:3.3px"><span class="d">-</span></span>
<span class="c k10" style="left:1092.9px;top:3.3px">Jun 6, 2023</span>
<span class="c k11" style="left:1185.8px;top:3.3px">Nancy Nancy</span>
</div>
<div class="row alt" style="top:293.8px"><span class="cb"></span>
<span class="c k1" style="left:26.7px;top:3.4px">EARL-0000815-0108...</span>
<span class="c k2" style="left:119.8px;top:3.4px">Aaronson Nikola Co...</span>
<span class="c k3" style="left:213.7px;top:3.4px">Aug 1, 2022</span>
<span class="c k4" style="left:306.8px;top:3.4px">Jul 31, 2022</span>
<span class="c k5" style="left:400.9px;top:3.4px">Jul 31, 2022</span>
<span class="c k6" style="left:493.8px;top:3.4px">Early Retirement</span>
<span class="c k7" style="left:586.8px;top:3.4px"><span class="r">No</span></span>
<span class="c k8" style="left:624.8px;top:3.4px">Awaiting <span class="r">processing</span>. Early Retirement processing at the initial stage on Jun 16, 2023</span>
<span class="c k9" style="left:999.3px;top:3.4px"><span class="d">-</span></span>
<span class="c k10" style="left:1092.9px;top:3.4px">Jun 16, 2023</span>
<span class="c k11" style="left:1185.8px;top:3.4px">Mugo Victor</span>
</div>
<div class="row" style="top:306.7px"><span class="cb"></span>
<span class="c k1" style="left:26.7px;top:3.5px">EARL-0000280-0108...</span>
<span class="c k2" style="left:119.8px;top:3.5px">Raggoo Ravi - <i>00002...</i></span>
<span class="c k3" style="left:213.7px;top:3.5px">Aug 1, 2022</span>
<span class="c k4" style="left:306.8px;top:3.5px">Jul 31, 2022</span>
<span class="c k5" style="left:400.9px;top:3.5px">Jul 31, 2022</span>
<span class="c k6" style="left:493.8px;top:3.5px">Early Retirement</span>
<span class="c k7" style="left:586.8px;top:3.5px"><span class="r">No</span></span>
<span class="c k8" style="left:624.8px;top:3.5px">Awaiting <span class="r">processing</span>. Early Retirement processing at the initial stage on May 29, 2023</span>
<span class="c k9" style="left:999.3px;top:3.5px"><span class="d">-</span></span>
<span class="c k10" style="left:1092.9px;top:3.5px">May 29, 2023</span>
<span class="c k11" style="left:1185.8px;top:3.5px">Mugo Victor</span>
</div>
<div class="row alt" style="top:319.6px"><span class="cb"></span>
<span class="c k1" style="left:26.7px;top:3.6px">EARL-0001997-3107...</span>
<span class="c k2" style="left:119.8px;top:3.6px">Dursley Coral Dursl...</span>
<span class="c k3" style="left:213.7px;top:3.6px">Jul 31, 2022</span>
<span class="c k4" style="left:306.8px;top:3.6px">Sep 12, 2016</span>
<span class="c k5" style="left:400.9px;top:3.6px">Jul 31, 2022</span>
<span class="c k6" style="left:493.8px;top:3.6px">Early Retirement</span>
<span class="c k7" style="left:586.8px;top:3.6px"><span class="r">No</span></span>
<span class="c k8" style="left:624.8px;top:3.6px">Awaiting <span class="r">processing</span>. Early Retirement processing at the initial stage on Jun 7, 2023</span>
<span class="c k9" style="left:999.3px;top:3.6px"><span class="d">-</span></span>
<span class="c k10" style="left:1092.9px;top:3.6px">Jun 7, 2023</span>
<span class="c k11" style="left:1185.8px;top:3.6px">Mugo Victor</span>
</div>
<div class="row" style="top:332.5px"><span class="cb"></span>
<span class="c k1" style="left:26.7px;top:3.7px">EARL-0001998-3107...</span>
<span class="c k2" style="left:119.8px;top:3.7px">Krysztowczyk Whita...</span>
<span class="c k3" style="left:213.7px;top:3.7px">Jul 31, 2022</span>
<span class="c k4" style="left:306.8px;top:3.7px">Aug 30, 2016</span>
<span class="c k5" style="left:400.9px;top:3.7px">Jul 31, 2022</span>
<span class="c k6" style="left:493.8px;top:3.7px">Early Retirement</span>
<span class="c k7" style="left:586.8px;top:3.7px"><span class="r">No</span></span>
<span class="c k8" style="left:624.8px;top:3.7px">Awaiting <span class="r">processing</span>. Early Retirement processing at the initial stage on Jun 7, 2023</span>
<span class="c k9" style="left:999.3px;top:3.7px"><span class="d">-</span></span>
<span class="c k10" style="left:1092.9px;top:3.7px">Jun 7, 2023</span>
<span class="c k11" style="left:1185.8px;top:3.7px">Mugo Victor</span>
</div>
<div class="row alt" style="top:345.4px"><span class="cb"></span>
<span class="c k1" style="left:26.7px;top:3.8px">EARL-0001999-3107...</span>
<span class="c k2" style="left:119.8px;top:3.8px">Worvell Carolyne Sis...</span>
<span class="c k3" style="left:213.7px;top:3.8px">Jul 31, 2022</span>
<span class="c k4" style="left:306.8px;top:3.8px">Jul 12, 2015</span>
<span class="c k5" style="left:400.9px;top:3.8px">Jul 31, 2022</span>
<span class="c k6" style="left:493.8px;top:3.8px">Early Retirement</span>
<span class="c k7" style="left:586.8px;top:3.8px"><span class="r">No</span></span>
<span class="c k8" style="left:624.8px;top:3.8px">Awaiting <span class="r">processing</span>. Early Retirement processing at the initial stage on Jun 7, 2023</span>
<span class="c k9" style="left:999.3px;top:3.8px"><span class="d">-</span></span>
<span class="c k10" style="left:1092.9px;top:3.8px">Jun 7, 2023</span>
<span class="c k11" style="left:1185.8px;top:3.8px">Mugo Victor</span>
</div>
<div class="row" style="top:358.3px"><span class="cb"></span>
<span class="c k1" style="left:26.7px;top:3.9px">NORM-0000328-010...</span>
<span class="c k2" style="left:119.8px;top:3.9px">Damree Sharmila - ...</span>
<span class="c k3" style="left:213.7px;top:3.9px">Jul 1, 2022</span>
<span class="c k4" style="left:306.8px;top:3.9px">May 31, 2022</span>
<span class="c k5" style="left:400.9px;top:3.9px">May 31, 2022</span>
<span class="c k6" style="left:493.8px;top:3.9px">Normal Retirement</span>
<span class="c k7" style="left:586.8px;top:3.9px"><span class="r">No</span></span>
<span class="c k8" style="left:624.8px;top:3.9px">Awaiting <span class="r">processing</span>. Normal Retirement processing at the initial stage on Jun 15, 2023</span>
<span class="c k9" style="left:999.3px;top:3.9px"><span class="d">-</span></span>
<span class="c k10" style="left:1092.9px;top:3.9px">Jun 15, 2023</span>
<span class="c k11" style="left:1185.8px;top:3.9px">Fundmaster System</span>
</div>
<div class="grp" style="top:371.2px"><span class="minus"></span><span class="gt" style="top:5px">Withdrawal (4 Categories)</span></div>
<div class="row" style="top:386.6px"><span class="cb"></span>
<span class="c k1" style="left:26.7px;top:3.6px">TRAN-0001952-0110...</span>
<span class="c k2" style="left:119.8px;top:3.6px">Williams John - <i>0001...</i></span>
<span class="c k3" style="left:213.7px;top:3.6px">Oct 1, 2022</span>
<span class="c k4" style="left:306.8px;top:3.6px">Mar 3, 2017</span>
<span class="c k5" style="left:400.9px;top:3.6px">Sep 30, 2022</span>
<span class="c k6" style="left:493.8px;top:3.6px">Transfer Out</span>
<span class="c k7" style="left:586.8px;top:3.6px"><span class="r">No</span></span>
<span class="c k8" style="left:624.8px;top:3.6px">Awaiting <span class="r">processing</span>. Transfer Out processing at the initial stage on May 30, 2023</span>
<span class="c k9" style="left:999.3px;top:3.6px"><span class="d">-</span></span>
<span class="c k10" style="left:1092.9px;top:3.6px">May 30, 2023</span>
<span class="c k11" style="left:1185.8px;top:3.6px">Mugo Victor</span>
</div>
<div class="row alt" style="top:399.5px"><span class="cb"></span>
<span class="c k1" style="left:26.7px;top:3.7px">TRAN-0000344-0109...</span>
<span class="c k2" style="left:119.8px;top:3.7px">Chady Salim - <i>00003...</i></span>
<span class="c k3" style="left:213.7px;top:3.7px">Sep 1, 2022</span>
<span class="c k4" style="left:306.8px;top:3.7px">Jul 31, 2022</span>
<span class="c k5" style="left:400.9px;top:3.7px">Aug 31, 2022</span>
<span class="c k6" style="left:493.8px;top:3.7px">Transfer Out</span>
<span class="c k7" style="left:586.8px;top:3.7px"><span class="r">No</span></span>
<span class="c k8" style="left:624.8px;top:3.7px">Awaiting <span class="r">processing</span>. Transfer Out processing at the initial stage on May 30, 2023</span>
<span class="c k9" style="left:999.3px;top:3.7px"><span class="d">-</span></span>
<span class="c k10" style="left:1092.9px;top:3.7px">May 30, 2023</span>
<span class="c k11" style="left:1185.8px;top:3.7px">Mugo Victor</span>
</div>
<div class="row" style="top:412.4px"><span class="cb"></span>
<span class="c k1" style="left:26.7px;top:3.8px">TRAN-0001948-0109...</span>
<span class="c k2" style="left:119.8px;top:3.8px">Frank Kaka - <i>0001948</i></span>
<span class="c k3" style="left:213.7px;top:3.8px">Sep 1, 2022</span>
<span class="c k4" style="left:306.8px;top:3.8px">Apr 18, 2022</span>
<span class="c k5" style="left:400.9px;top:3.8px">Aug 31, 2022</span>
<span class="c k6" style="left:493.8px;top:3.8px">Transfer Out</span>
<span class="c k7" style="left:586.8px;top:3.8px"><span class="r">No</span></span>
<span class="c k8" style="left:624.8px;top:3.8px">Awaiting <span class="r">processing</span>. Transfer Out processing at the initial stage on May 30, 2023</span>
<span class="c k9" style="left:999.3px;top:3.8px"><span class="d">-</span></span>
<span class="c k10" style="left:1092.9px;top:3.8px">May 30, 2023</span>
<span class="c k11" style="left:1185.8px;top:3.8px">Mugo Victor</span>
</div>
<div class="row alt" style="top:425.3px"><span class="cb"></span>
<span class="c k1" style="left:26.7px;top:3.9px">TRAN-0001951-0108...</span>
<span class="c k2" style="left:119.8px;top:3.9px">Williams John - <i>0001...</i></span>
<span class="c k3" style="left:213.7px;top:3.9px">Aug 1, 2022</span>
<span class="c k4" style="left:306.8px;top:3.9px">Jan 12, 2018</span>
<span class="c k5" style="left:400.9px;top:3.9px">Jul 31, 2022</span>
<span class="c k6" style="left:493.8px;top:3.9px">Transfer Out</span>
<span class="c k7" style="left:586.8px;top:3.9px"><span class="r">No</span></span>
<span class="c k8" style="left:624.8px;top:3.9px">Awaiting <span class="r">processing</span>. Transfer Out processing at the initial stage on May 30, 2023</span>
<span class="c k9" style="left:999.3px;top:3.9px"><span class="d">-</span></span>
<span class="c k10" style="left:1092.9px;top:3.9px">May 30, 2023</span>
<span class="c k11" style="left:1185.8px;top:3.9px">Mugo Victor</span>
</div>
</div>
<!-- scrollbar -->
<svg class="abs" style="left:1320px;top:63px;overflow:visible" width="8" height="435" viewBox="1320 63 8 435">
<rect x="1320.100" y="63.800" width="6.900" height="430.200" fill="#7e7e7e"/>
<polygon points="1320.100,166.500 1327,171 1327,281.800 1320.100,276.500" fill="#9b9b9b"/>
<polygon points="1320.100,386.500 1327,391 1327,494 1320.100,494" fill="#9b9b9b"/>
<rect x="1320.100" y="494" width="6.900" height="3" fill="#ececec"/>
</svg>
<!-- paging toolbar -->
<div id="ptb">
  <span style="left:65.700px;top:6.900px">Page</span>
  <div class="abs" style="left:93.300px;top:4.100px;width:30.200px;height:13.400px;border:1px solid #4f96a8;border-radius:1.500px;background:#fff"><span style="left:5.200px;top:1.800px">1</span></div>
  <span style="left:128.200px;top:6.900px">of 1</span>
  <span style="left:1181.600px;top:6.900px;color:#555;font-size:6.83px">Displaying Exits 1 - 28 of 28</span>
</div>
<svg class="abs" style="left:0;top:497px;overflow:visible" width="1331" height="26" viewBox="0 497 1331 26"><g fill="#c6c6c6"><polygon points="56.9,504.9 53.5,504.9 50.4,509.4 53.5,513.9 56.9,513.9 53.8,509.4"/><polygon points="62.6,504.9 59.2,504.9 56.1,509.4 59.2,513.9 62.6,513.9 59.5,509.4"/><polygon points="84.3,504.9 80.6,504.9 77.2,509.4 80.6,513.9 84.3,513.9 80.9,509.4"/><polygon points="204.0,504.9 207.7,504.9 211.1,509.4 207.7,513.9 204.0,513.9 207.4,509.4"/><polygon points="226.5,504.9 229.8,504.9 232.8,509.4 229.8,513.9 226.5,513.9 229.5,509.4"/><polygon points="231.7,504.9 235.0,504.9 238.0,509.4 235.0,513.9 231.7,513.9 234.7,509.4"/></g><g fill="#4a94a7"><rect x="95.5" y="505" width="1.4" height="8.500"/><rect x="191.7" y="505" width="1.4" height="8.500"/><rect x="246.7" y="505" width="1.4" height="8.500"/></g><path d="M268.300 509.400c0 2.200-2.200 3.800-5 3.800s-5.100-1.700-5.100-3.900 2.300-3.900 5.100-3.900c1.700 0 3.100.6 4 1.500" stroke="#8c8c8c" stroke-width="1.500" fill="none"/><path d="M269.500 504.700v3.800h-4.600z" fill="#8c8c8c"/></svg>
<!-- bottom frame -->
<div class="abs" style="left:2px;top:522.700px;width:1326px;height:1.300px;background:#000"></div>
<div class="abs" style="left:2px;top:522.200px;width:32.700px;height:0.600px;background:#8d949c"></div>
</body>
</html>
